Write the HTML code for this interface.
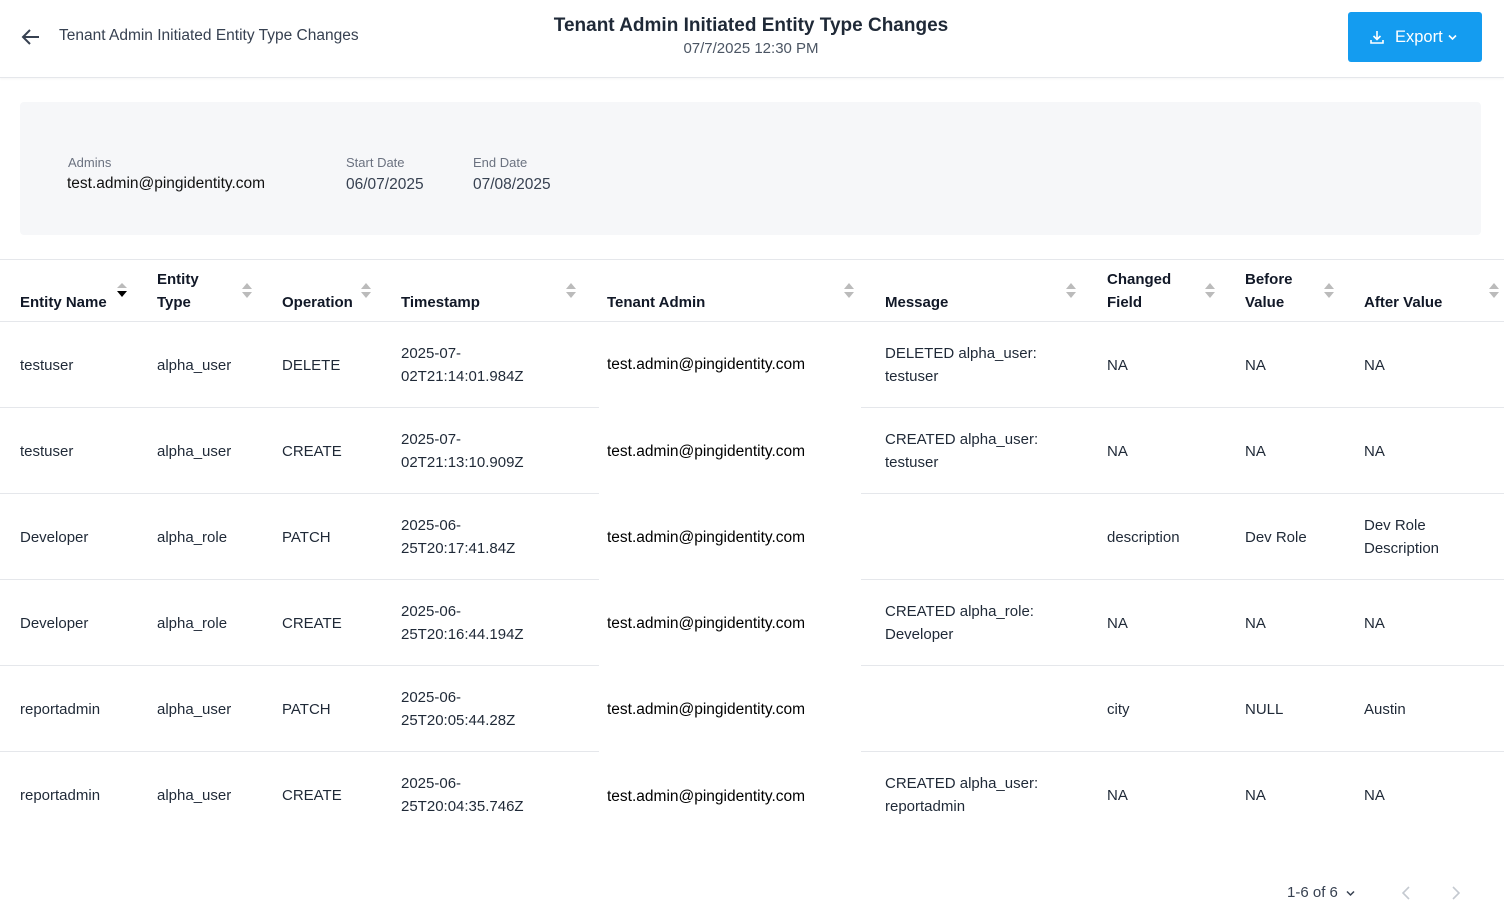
<!DOCTYPE html>
<html><head><meta charset="utf-8"><style>
*{margin:0;padding:0;box-sizing:border-box}
body{width:1504px;height:905px;overflow:hidden;background:#fff;font-family:"Liberation Sans",sans-serif;color:#1f2937;position:relative}
.a{position:absolute;white-space:nowrap}
.hdr{position:absolute;left:0;top:0;width:1504px;height:78px;border-bottom:1px solid #e5e7eb;box-shadow:0 1px 2px rgba(0,0,0,.04)}
.th{font-size:15px;font-weight:bold;color:#111827;line-height:23px}
.td{font-size:15px;color:#1f2937;line-height:23px}
.sort{position:absolute;width:10px;height:15px}
.line{position:absolute;height:1px;background:#e5e7eb}
</style></head><body>
<div class="hdr"></div>
<svg class="a" style="left:21px;top:28px" width="20" height="18" viewBox="0 0 20 18"><path d="M18 9H3M9 2L2 9l7 7" fill="none" stroke="#374151" stroke-width="2"/></svg>
<div class="a" style="left:59px;top:27px;font-size:15.5px;color:#374151">Tenant Admin Initiated Entity Type Changes</div>
<div class="a" style="left:0;width:1502px;top:15px;text-align:center;font-size:19px;font-weight:bold;color:#1f2937">Tenant Admin Initiated Entity Type Changes</div>
<div class="a" style="left:0;width:1502px;top:40px;text-align:center;font-size:15px;color:#4b5563">07/7/2025 12:30 PM</div>
<div class="a" style="left:1348px;top:12px;width:134px;height:50px;background:#149cf0;border-radius:3px"></div>
<svg class="a" style="left:1370px;top:30px" width="14" height="15" viewBox="0 0 14 15"><path d="M7 1v8M3.5 6L7 9.5 10.5 6M1 10v3h12v-3" fill="none" stroke="#fff" stroke-width="1.6"/></svg>
<div class="a" style="left:1395px;top:28px;font-size:16.5px;color:#fff">Export</div>
<svg class="a" style="left:1448px;top:34px" width="9" height="7" viewBox="0 0 9 7"><path d="M1 1.5l3.5 3.5 3.5-3.5" fill="none" stroke="#fff" stroke-width="1.6"/></svg>
<div class="a" style="left:20px;top:102px;width:1461px;height:133px;background:#f6f7f9;border-radius:4px"></div>
<div class="a" style="left:68px;top:155px;font-size:13px;color:#6b7280">Admins</div>
<div class="a" style="left:67px;top:175px;font-size:15.5px;color:#111">test.admin@pingidentity.com</div>
<div class="a" style="left:346px;top:155px;font-size:13px;color:#6b7280">Start Date</div>
<div class="a" style="left:346px;top:176px;font-size:15.5px;color:#374151">06/07/2025</div>
<div class="a" style="left:473px;top:155px;font-size:13px;color:#6b7280">End Date</div>
<div class="a" style="left:473px;top:176px;font-size:15.5px;color:#374151">07/08/2025</div>
<div class="line" style="left:0;top:259px;width:1504px"></div>
<div class="line" style="left:0;top:321px;width:1504px"></div>
<div class="a th" style="left:20px;top:291px">Entity Name</div>
<div class="a th" style="left:157px;top:268px">Entity<br>Type</div>
<div class="a th" style="left:282px;top:291px">Operation</div>
<div class="a th" style="left:401px;top:291px">Timestamp</div>
<div class="a th" style="left:607px;top:291px">Tenant Admin</div>
<div class="a th" style="left:885px;top:291px">Message</div>
<div class="a th" style="left:1107px;top:268px">Changed<br>Field</div>
<div class="a th" style="left:1245px;top:268px">Before<br>Value</div>
<div class="a th" style="left:1364px;top:291px">After Value</div>
<svg class="sort" style="left:117px;top:283px" viewBox="0 0 10 15"><path d="M5 0L10 5H0z" fill="#bbb"/><path d="M5 14L10 8H0z" fill="#000"/></svg>
<svg class="sort" style="left:242px;top:283px" viewBox="0 0 10 15"><path d="M5 0L10 6H0zM5 15L10 9H0z" fill="#bbb"/></svg>
<svg class="sort" style="left:361px;top:283px" viewBox="0 0 10 15"><path d="M5 0L10 6H0zM5 15L10 9H0z" fill="#bbb"/></svg>
<svg class="sort" style="left:566px;top:283px" viewBox="0 0 10 15"><path d="M5 0L10 6H0zM5 15L10 9H0z" fill="#bbb"/></svg>
<svg class="sort" style="left:844px;top:283px" viewBox="0 0 10 15"><path d="M5 0L10 6H0zM5 15L10 9H0z" fill="#bbb"/></svg>
<svg class="sort" style="left:1066px;top:283px" viewBox="0 0 10 15"><path d="M5 0L10 6H0zM5 15L10 9H0z" fill="#bbb"/></svg>
<svg class="sort" style="left:1205px;top:283px" viewBox="0 0 10 15"><path d="M5 0L10 6H0zM5 15L10 9H0z" fill="#bbb"/></svg>
<svg class="sort" style="left:1324px;top:283px" viewBox="0 0 10 15"><path d="M5 0L10 6H0zM5 15L10 9H0z" fill="#bbb"/></svg>
<svg class="sort" style="left:1489px;top:283px" viewBox="0 0 10 15"><path d="M5 0L10 6H0zM5 15L10 9H0z" fill="#bbb"/></svg>

<div class="line" style="left:0;top:407px;width:599px"></div><div class="line" style="left:861px;top:407px;width:643px"></div>
<div class="line" style="left:0;top:493px;width:599px"></div><div class="line" style="left:861px;top:493px;width:643px"></div>
<div class="line" style="left:0;top:579px;width:599px"></div><div class="line" style="left:861px;top:579px;width:643px"></div>
<div class="line" style="left:0;top:665px;width:599px"></div><div class="line" style="left:861px;top:665px;width:643px"></div>
<div class="line" style="left:0;top:751px;width:599px"></div><div class="line" style="left:861px;top:751px;width:643px"></div>

<div class="a td" style="left:20px;top:354px">testuser</div><div class="a td" style="left:157px;top:354px">alpha_user</div><div class="a td" style="left:282px;top:354px">DELETE</div><div class="a td" style="left:401px;top:342px">2025-07-<br>02T21:14:01.984Z</div><div class="a td" style="left:607px;top:353px;color:#000;font-size:15.5px">test.admin@pingidentity.com</div><div class="a td" style="left:885px;top:342px">DELETED alpha_user:<br>testuser</div><div class="a td" style="left:1107px;top:354px">NA</div><div class="a td" style="left:1245px;top:354px">NA</div><div class="a td" style="left:1364px;top:354px">NA</div>

<div class="a td" style="left:20px;top:440px">testuser</div><div class="a td" style="left:157px;top:440px">alpha_user</div><div class="a td" style="left:282px;top:440px">CREATE</div><div class="a td" style="left:401px;top:428px">2025-07-<br>02T21:13:10.909Z</div><div class="a td" style="left:607px;top:440px;color:#000;font-size:15.5px">test.admin@pingidentity.com</div><div class="a td" style="left:885px;top:428px">CREATED alpha_user:<br>testuser</div><div class="a td" style="left:1107px;top:440px">NA</div><div class="a td" style="left:1245px;top:440px">NA</div><div class="a td" style="left:1364px;top:440px">NA</div>

<div class="a td" style="left:20px;top:526px">Developer</div><div class="a td" style="left:157px;top:526px">alpha_role</div><div class="a td" style="left:282px;top:526px">PATCH</div><div class="a td" style="left:401px;top:514px">2025-06-<br>25T20:17:41.84Z</div><div class="a td" style="left:607px;top:526px;color:#000;font-size:15.5px">test.admin@pingidentity.com</div><div class="a td" style="left:1107px;top:526px">description</div><div class="a td" style="left:1245px;top:526px">Dev Role</div><div class="a td" style="left:1364px;top:514px">Dev Role<br>Description</div>

<div class="a td" style="left:20px;top:612px">Developer</div><div class="a td" style="left:157px;top:612px">alpha_role</div><div class="a td" style="left:282px;top:612px">CREATE</div><div class="a td" style="left:401px;top:600px">2025-06-<br>25T20:16:44.194Z</div><div class="a td" style="left:607px;top:612px;color:#000;font-size:15.5px">test.admin@pingidentity.com</div><div class="a td" style="left:885px;top:600px">CREATED alpha_role:<br>Developer</div><div class="a td" style="left:1107px;top:612px">NA</div><div class="a td" style="left:1245px;top:612px">NA</div><div class="a td" style="left:1364px;top:612px">NA</div>

<div class="a td" style="left:20px;top:698px">reportadmin</div><div class="a td" style="left:157px;top:698px">alpha_user</div><div class="a td" style="left:282px;top:698px">PATCH</div><div class="a td" style="left:401px;top:686px">2025-06-<br>25T20:05:44.28Z</div><div class="a td" style="left:607px;top:698px;color:#000;font-size:15.5px">test.admin@pingidentity.com</div><div class="a td" style="left:1107px;top:698px">city</div><div class="a td" style="left:1245px;top:698px">NULL</div><div class="a td" style="left:1364px;top:698px">Austin</div>

<div class="a td" style="left:20px;top:784px">reportadmin</div><div class="a td" style="left:157px;top:784px">alpha_user</div><div class="a td" style="left:282px;top:784px">CREATE</div><div class="a td" style="left:401px;top:772px">2025-06-<br>25T20:04:35.746Z</div><div class="a td" style="left:607px;top:785px;color:#000;font-size:15.5px">test.admin@pingidentity.com</div><div class="a td" style="left:885px;top:772px">CREATED alpha_user:<br>reportadmin</div><div class="a td" style="left:1107px;top:784px">NA</div><div class="a td" style="left:1245px;top:784px">NA</div><div class="a td" style="left:1364px;top:784px">NA</div>

<div class="a" style="left:1287px;top:884px;font-size:15px;color:#374151">1-6 of 6</div>
<svg class="a" style="left:1346px;top:890px" width="9" height="7" viewBox="0 0 9 7"><path d="M1 1.5l3.5 3.5 3.5-3.5" fill="none" stroke="#374151" stroke-width="1.5"/></svg>
<svg class="a" style="left:1402px;top:886px" width="8" height="14" viewBox="0 0 8 14"><path d="M7 1L1 7l6 6" fill="none" stroke="#c4c9d0" stroke-width="1.6"/></svg>
<svg class="a" style="left:1452px;top:886px" width="8" height="14" viewBox="0 0 8 14"><path d="M1 1l6 6-6 6" fill="none" stroke="#c4c9d0" stroke-width="1.6"/></svg>
</body></html>
